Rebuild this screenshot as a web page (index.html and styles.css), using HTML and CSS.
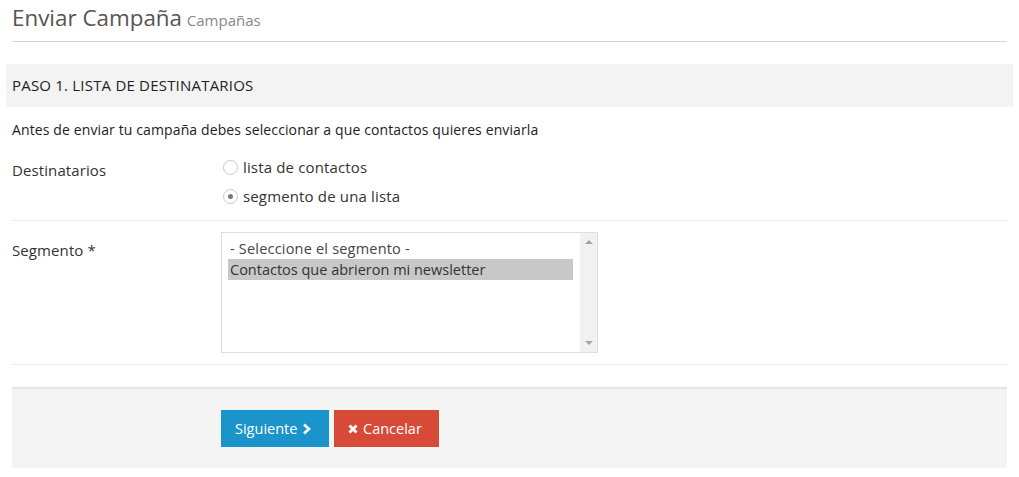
FILE: index.html
```html
<!DOCTYPE html>
<html lang="es">
<head>
    <meta charset="UTF-8">
    <title>Enviar Campaña</title>
    <link rel="stylesheet" href="styles.css">
</head>
<body>
    <div class="page">
        <h1 class="page-title">Enviar Campaña <small>Campañas</small></h1>

        <div class="panel-head">PASO 1. LISTA DE DESTINATARIOS</div>

        <p class="intro">Antes de enviar tu campaña debes seleccionar a que contactos quieres enviarla</p>

        <div class="form-row">
            <label class="form-label">Destinatarios</label>
            <div class="radios">
                <label class="radio"><span class="dot"></span>lista de contactos</label>
                <label class="radio"><span class="dot checked"></span>segmento de una lista</label>
            </div>
        </div>

        <div class="form-row">
            <label class="form-label">Segmento *</label>
            <div class="listbox">
                <div class="options">
                    <div class="option">- Seleccione el segmento -</div>
                    <div class="option selected">Contactos que abrieron mi newsletter</div>
                </div>
                <div class="scrollbar">
                    <span class="arrow up"></span>
                    <span class="arrow down"></span>
                </div>
            </div>
        </div>

        <div class="actions">
            <button class="btn btn-primary">Siguiente
                <svg width="10" height="12" viewBox="0 0 10 12"><path d="M2 1.5 L7 6 L2 10.5" fill="none" stroke="#fff" stroke-width="2.6"/></svg>
            </button>
            <button class="btn btn-danger">
                <svg width="10" height="10" viewBox="0 0 10 10"><path d="M1.5 1.5 L8.5 8.5 M8.5 1.5 L1.5 8.5" stroke="#fff" stroke-width="2.8"/></svg>
                Cancelar</button>
        </div>
    </div>
</body>
</html>
```

FILE: styles.css
```css
* {
    margin: 0;
    padding: 0;
    box-sizing: border-box;
}

body {
    font-family: "Open Sans", Arial, sans-serif;
    font-size: 15px;
    color: #333;
    background: #fff;
}

.page {
    padding: 0 12px;
}

.page-title {
    font-size: 22.4px;
    font-weight: normal;
    color: #555;
    padding: 1px 0 6px;
    border-bottom: 1px solid #d5d5d5;
    line-height: 34px;
}

.page-title small {
    font-size: 15px;
    line-height: 1;
    color: #888;
    margin-left: -1px;
}

.panel-head {
    margin: 22px -6px 0;
    padding: 0 6px;
    height: 43px;
    line-height: 43px;
    background: #f3f3f3;
    font-size: 15px;
    letter-spacing: 0.2px;
    color: #222;
}

.intro {
    font-size: 14px;
    letter-spacing: 0.12px;
    color: #222;
    margin-top: 13px;
    line-height: 20px;
}

.form-row {
    display: grid;
    grid-template-columns: 209px 1fr;
    border-bottom: 1px solid #e8e8e8;
    padding: 12px 0 14px;
}

.form-row + .form-row {
    padding: 11px 0 11px;
}

.form-label {
    color: #333;
    padding-top: 8px;
    letter-spacing: 0.1px;
}

.radios {
    display: flex;
    flex-direction: column;
    gap: 9px;
    padding-top: 5px;
}

.radio {
    display: flex;
    align-items: center;
    gap: 5px;
    color: #333;
    line-height: 20px;
    margin-left: 2px;
    letter-spacing: 0.15px;
}

.dot {
    width: 15px;
    height: 15px;
    border: 1px solid #c8c8c8;
    border-radius: 50%;
    background: #fff;
    display: inline-flex;
    align-items: center;
    justify-content: center;
}

.dot.checked::after {
    content: "";
    width: 5px;
    height: 5px;
    border-radius: 50%;
    background: #777;
}

.listbox {
    width: 377px;
    height: 121px;
    border: 1px solid #ddd;
    display: flex;
    font-size: 14.5px;
}

.options {
    flex: 1;
    padding: 5px 7px 0 6px;
}

.option {
    line-height: 21px;
    color: #444;
    padding-left: 2px;
}

.option:first-child {
    letter-spacing: 0.2px;
}

.option.selected {
    background: #c8c8c8;
    color: #333;
}

.scrollbar {
    width: 17px;
    background: #f1f1f1;
    display: flex;
    flex-direction: column;
    justify-content: space-between;
    align-items: center;
    padding: 7px 0;
}

.arrow {
    width: 0;
    height: 0;
    border-left: 4px solid transparent;
    border-right: 4px solid transparent;
}

.arrow.up {
    border-bottom: 4px solid #a3a3a3;
}

.arrow.down {
    border-top: 4px solid #a3a3a3;
}

.actions {
    margin-top: 22px;
    background: #f4f4f4;
    border-top: 2px solid #e5e5e5;
    height: 81px;
    padding: 21px 0 0 209px;
    display: flex;
    gap: 5px;
    align-items: flex-start;
}

.btn {
    height: 37px;
    border: none;
    color: #fff;
    font-family: "Open Sans", Arial, sans-serif;
    font-size: 14.5px;
    padding: 0 14px;
    display: inline-flex;
    align-items: center;
    gap: 5px;
    cursor: pointer;
}

.btn-primary {
    background: #1a94ca;
    width: 108px;
}

.btn-danger {
    background: #d74a38;
    width: 105px;
}
```
